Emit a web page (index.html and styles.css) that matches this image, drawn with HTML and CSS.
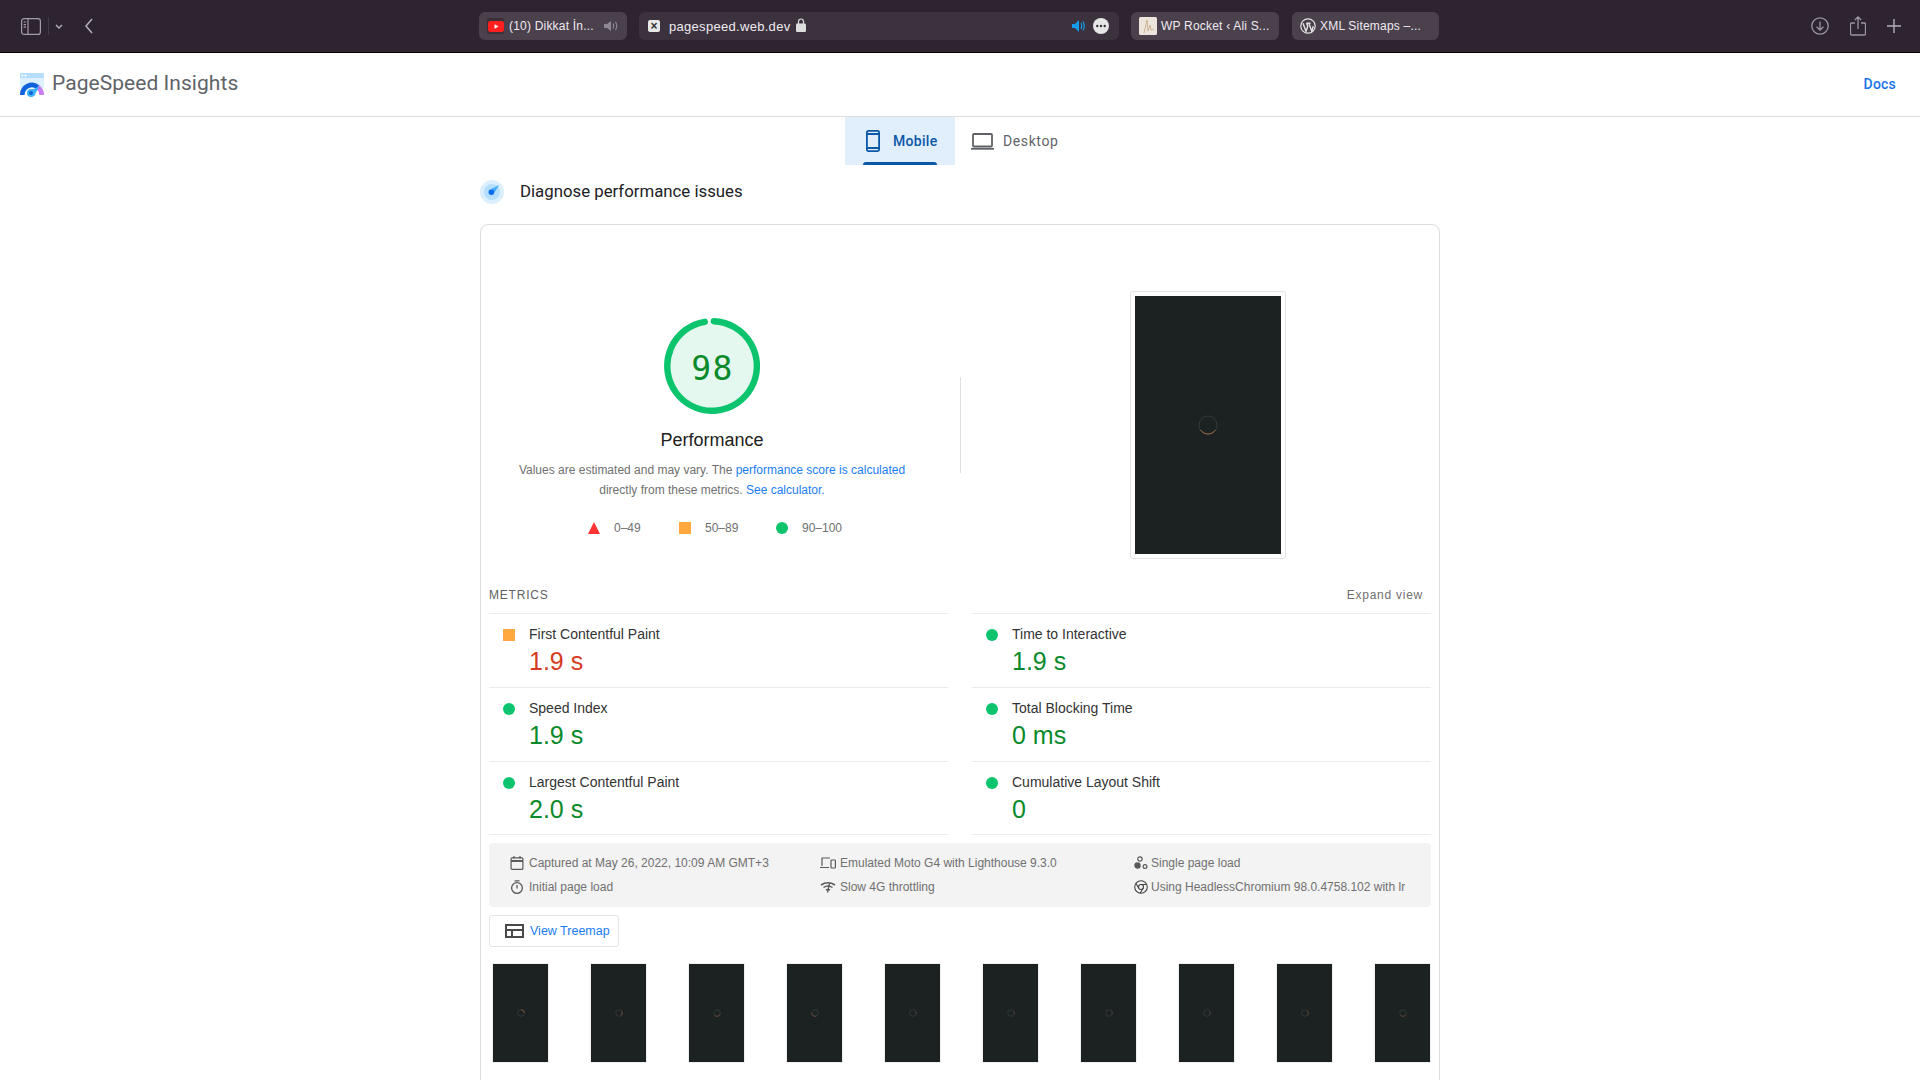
FILE: index.html
```html
<!DOCTYPE html>
<html lang="en">
<head>
<meta charset="utf-8">
<title>PageSpeed Insights</title>
<link rel="stylesheet" href="styles.css">
</head>
<body>
<div class="topbar">
  <div class="tb-left">
    <svg class="i-side" width="20" height="17" viewBox="0 0 20 17" fill="none" stroke="#a39ba6" stroke-width="1.2"><rect x=".6" y=".6" width="18.8" height="15.8" rx="2.5"/><path d="M7 .6v15.8M2.6 4h2.4M2.6 6.6h2.4M2.6 9.2h2.4"/></svg>
    <span class="tb-sep"></span>
    <svg class="i-chev" width="8" height="5" viewBox="0 0 8 5" fill="none" stroke="#b5aeb8" stroke-width="1.4"><path d="M1 1l3 3 3-3"/></svg>
    <svg class="i-back" width="8" height="16" viewBox="0 0 8 16" fill="none" stroke="#b5aeb8" stroke-width="1.5"><path d="M7 1L1 8l6 7"/></svg>
  </div>
  <div class="tab t1">
    <span class="fav-yt"><svg width="16" height="11" viewBox="0 0 16 11"><rect width="16" height="11" rx="2.5" fill="#ff1f1f"/><path d="M6.5 3.2v4.6L10.5 5.500z" fill="#fff"/></svg></span>
    <span class="tab-text w-yt">(10) Dikkat İn...</span>
    <svg width="15" height="10" viewBox="0 0 15 10" fill="#8f8892"><path d="M0 3h3l4-3v10L3 7H0z"/><path d="M9 2.500q1.500 2.500 0 5M11.500 1q2.500 4 0 8" fill="none" stroke="#8f8892" stroke-width="1.2"/></svg>
  </div>
  <div class="url">
    <span class="fav-x">×</span>
    <span class="url-text">pagespeed.web.dev</span>
    <svg class="i-lock" width="10" height="14" viewBox="0 0 10 14"><path d="M2.500 6V3.500a2.500 2.500 0 0 1 5 0V6" fill="none" stroke="#ddd" stroke-width="1.2"/><rect y="5.500" width="10" height="8.500" rx="1.3" fill="#ddd"/></svg>
    <span class="url-gap"></span>
    <svg width="14" height="12" viewBox="0 0 14 12" fill="#1799ea"><path d="M0 4h3l4-4v12L3 8H0z"/><path d="M9 3q1.500 3 0 6M11 1.500q2.500 4.500 0 9" fill="none" stroke="#1799ea" stroke-width="1.2"/></svg>
    <svg class="i-dots" width="16" height="16" viewBox="0 0 16 16"><circle cx="8" cy="8" r="8" fill="#e6e6e6"/><circle cx="4.300" cy="8" r="1.200" fill="#333"/><circle cx="8" cy="8" r="1.200" fill="#333"/><circle cx="11.700" cy="8" r="1.200" fill="#333"/></svg>
  </div>
  <div class="tab t3">
    <svg class="fav-sig" width="18" height="18" viewBox="0 0 18 18"><rect width="18" height="18" rx="1.5" fill="#ece5dc"/><path d="M5 16L8 3l1 11 2-6 1 5 3-1" fill="none" stroke="#c9ad8b" stroke-width=".9"/></svg>
    <span class="tab-text">WP Rocket ‹ Ali S...</span>
  </div>
  <div class="tab t4">
    <svg class="fav-wp" width="16" height="16" viewBox="0 0 16 16"><circle cx="8" cy="8" r="7.2" fill="none" stroke="#e4e4e4" stroke-width="1.2"/><path d="M3 5.200l3 8 1.800-5-1.300-3M6.500 5.200h4M8.800 5.200l3 8 1.500-5" fill="none" stroke="#e4e4e4" stroke-width="1.4"/></svg>
    <span class="tab-text">XML Sitemaps –...</span>
  </div>
  <div class="tb-right">
    <svg width="18" height="18" viewBox="0 0 18 18" fill="none" stroke="#9c959f" stroke-width="1.3"><circle cx="9" cy="9" r="8.200"/><path d="M9 4.500v8.500M5.500 9.800L9 13l3.500-3.200"/></svg>
    <svg width="16" height="20" viewBox="0 0 16 20" fill="none" stroke="#9c959f" stroke-width="1.3"><path d="M5 7H1.500a1 1 0 0 0-1 1v10a1 1 0 0 0 1 1h13a1 1 0 0 0 1-1V8a1 1 0 0 0-1-1H11M8 13V1M4.800 4L8 1l3.200 3"/></svg>
    <svg width="14" height="14" viewBox="0 0 14 14" fill="none" stroke="#b5aeb8" stroke-width="1.4"><path d="M7 0v14M0 7h14"/></svg>
  </div>
</div>

<header class="psi-head">
  <svg class="logo" width="24" height="24" viewBox="0 0 24 24">
    <path d="M0 15V1.500A1.500 1.500 0 0 1 1.500 0h21A1.500 1.500 0 0 1 24 1.500V15z" fill="#dcf0fe"/>
    <path d="M0 5V1.500A1.500 1.500 0 0 1 1.500 0h21A1.500 1.500 0 0 1 24 1.500V5z" fill="#b4defc"/>
    <circle cx="2.500" cy="2.500" r="1" fill="#fff"/><circle cx="5.500" cy="2.500" r="1" fill="#fff"/>
    <path d="M2.300 22a9.700 9.700 0 0 1 15.500-8" fill="none" stroke="#0e63dc" stroke-width="4.600"/>
    <path d="M17.800 14a9.700 9.700 0 0 1 3.900 8" fill="none" stroke="#c97bf2" stroke-width="4.600"/>
    <path d="M8.500 18L19.500 13.500 14 23z" fill="#3fb0f8"/>
    <circle cx="11" cy="20" r="4" fill="#3db2f8"/>
    <circle cx="11" cy="20" r="2" fill="#0a62dc"/>
  </svg>
  <span class="psi-title">PageSpeed Insights</span>
  <a class="docs">Docs</a>
</header>

<nav class="modes">
  <div class="mode active">
    <svg width="14" height="22" viewBox="0 0 14 22" fill="none" stroke="#0b57a8" stroke-width="1.8"><rect x=".9" y=".9" width="12.200" height="20.200" rx="1.5"/><path d="M1 4h12M1 18h12"/></svg>
    <span>Mobile</span>
  </div>
  <div class="mode">
    <svg width="23" height="17" viewBox="0 0 23 17" fill="none" stroke="#5f6368" stroke-width="1.8"><rect x="2" y="1" width="19" height="12.500" rx="1"/><path d="M0 15.800h23"/></svg>
    <span>Desktop</span>
  </div>
</nav>

<main class="page">
  <div class="section-head">
    <svg width="24" height="24" viewBox="0 0 24 24"><circle cx="12" cy="12" r="12" fill="#dceffe"/><circle cx="12" cy="12" r="8" fill="#b5defc"/><path d="M8.500 10.500L19 5l-6 10z" fill="#42aaf8"/><circle cx="11.300" cy="12.300" r="2.700" fill="#0a6cf0"/></svg>
    <h2>Diagnose performance issues</h2>
  </div>

  <section class="card">
    <div class="hero">
      <div class="score">
        <svg class="gauge" width="96" height="96" viewBox="0 0 96 96">
          <circle cx="48" cy="48" r="45" fill="#e5f8ef"/>
          <path d="M49.900 3.240A44.800 44.800 0 1 1 40.800 3.800" fill="none" stroke="#0cc46d" stroke-width="6.400" stroke-linecap="round"/>
          <text x="48.500" y="61.500" text-anchor="middle" class="gauge-num">98</text>
        </svg>
        <div class="score-title">Performance</div>
        <p class="score-desc">Values are estimated and may vary. The <a>performance score is calculated</a><br>directly from these metrics. <a>See calculator.</a></p>
        <div class="legend">
          <span class="leg"><i class="tri"></i>0–49</span>
          <span class="leg"><i class="sq"></i>50–89</span>
          <span class="leg"><i class="dot"></i>90–100</span>
        </div>
      </div>
      <div class="vdiv"></div>
      <div class="shot">
        <svg width="20" height="20" viewBox="0 0 20 20" fill="none"><circle cx="10" cy="10" r="9" stroke="#343a3a" stroke-width="1"/><path d="M2.500 15a9 9 0 0 0 15 0" stroke="#a86a45" stroke-width="1"/></svg>
      </div>
    </div>

    <div class="metrics-head"><span class="m-label">METRICS</span><span class="m-expand">Expand view</span></div>
    <div class="metrics">
      <div class="metric"><i class="sq"></i><div><div class="m-name">First Contentful Paint</div><div class="m-val warn">1.9 s</div></div></div>
      <div class="metric"><i class="dot"></i><div><div class="m-name">Time to Interactive</div><div class="m-val good">1.9 s</div></div></div>
      <div class="metric"><i class="dot"></i><div><div class="m-name">Speed Index</div><div class="m-val good">1.9 s</div></div></div>
      <div class="metric"><i class="dot"></i><div><div class="m-name">Total Blocking Time</div><div class="m-val good">0 ms</div></div></div>
      <div class="metric last"><i class="dot"></i><div><div class="m-name">Largest Contentful Paint</div><div class="m-val good">2.0 s</div></div></div>
      <div class="metric last"><i class="dot"></i><div><div class="m-name">Cumulative Layout Shift</div><div class="m-val good">0</div></div></div>
    </div>

    <div class="runinfo">
      <div class="ri c1"><svg width="14" height="14" viewBox="0 0 14 14" fill="none" stroke="#5a5a5a" stroke-width="1.2"><rect x="1.100" y="1.800" width="11.800" height="11.600" rx="1"/><path d="M1 5h12" stroke-width="2"/><path d="M4 0v2.500M10 0v2.500"/></svg><span>Captured at May 26, 2022, 10:09 AM GMT+3</span></div>
      <div class="ri c2"><svg width="16" height="12" viewBox="0 0 16 12" fill="none" stroke="#5a5a5a" stroke-width="1.2"><path d="M10 1H2v8M0 10.500h9"/><rect x="11" y="3" width="4.400" height="8" rx=".8"/></svg><span>Emulated Moto G4 with Lighthouse 9.3.0</span></div>
      <div class="ri c3"><svg width="14" height="14" viewBox="0 0 14 14" fill="none" stroke="#5a5a5a" stroke-width="1.2"><circle cx="6" cy="3" r="2.200"/><circle cx="11" cy="10.500" r="1.900"/><circle cx="3.500" cy="9.500" r="2.600" fill="#5a5a5a"/></svg><span>Single page load</span></div>
      <div class="ri c1"><svg width="14" height="14" viewBox="0 0 14 14" fill="none" stroke="#5a5a5a" stroke-width="1.3"><circle cx="7" cy="8" r="5.400"/><path d="M4.500 .8h5M7 5v3.500"/></svg><span>Initial page load</span></div>
      <div class="ri c2"><svg width="16" height="12" viewBox="0 0 16 12" fill="none" stroke="#5a5a5a" stroke-width="1.5"><path d="M1 4q7-4.500 14 0M3.500 6.500q4.500-3 9 0M6 9q2-1 4 0"/><path d="M9.500 2.500L7.500 11.500" stroke-width="1.3"/></svg><span>Slow 4G throttling</span></div>
      <div class="ri c3"><svg width="14" height="14" viewBox="0 0 14 14" fill="none" stroke="#444" stroke-width="1.1"><circle cx="7" cy="7" r="6.300"/><circle cx="7" cy="7" r="2.500"/><path d="M7 4.500h6M4.800 8.300L1.800 3.200M9.200 8.300L6 13.200"/></svg><span class="clip">Using HeadlessChromium 98.0.4758.102 with lr</span></div>
    </div>

    <a class="treemap">
      <svg width="19" height="14" viewBox="0 0 19 14" fill="none" stroke="#4a4a4a" stroke-width="2"><rect x="1" y="1" width="17" height="12"/><path d="M1 6h17M7 6v7"/></svg>
      <span>View Treemap</span>
    </a>

    <div class="film">
      <div class="thumb"><svg width="8" height="8" viewBox="0 0 8 8" fill="none"><circle cx="4" cy="4" r="3.3" stroke="#323838"/><path d="M4 .7A3.300 3.300 0 0 1 7.300 4" stroke="#7a5038"/></svg></div>
      <div class="thumb"><svg width="8" height="8" viewBox="0 0 8 8" fill="none"><circle cx="4" cy="4" r="3.3" stroke="#323838"/><path d="M6 1.400A3.300 3.300 0 0 1 6 6.600" stroke="#6a4a38"/></svg></div>
      <div class="thumb"><svg width="8" height="8" viewBox="0 0 8 8" fill="none"><circle cx="4" cy="4" r="3.3" stroke="#323838"/><path d="M7 5.500A3.300 3.300 0 0 1 2 6.600" stroke="#6a4a38"/></svg></div>
      <div class="thumb"><svg width="8" height="8" viewBox="0 0 8 8" fill="none"><circle cx="4" cy="4" r="3.3" stroke="#323838"/><path d="M5.500 7A3.300 3.300 0 0 1 .8 4" stroke="#6a4a38"/></svg></div>
      <div class="thumb"><svg width="8" height="8" viewBox="0 0 8 8" fill="none"><circle cx="4" cy="4" r="3.3" stroke="#323838"/><path d="M7 2.600A3.300 3.300 0 0 1 7 5.400" stroke="#4f4238"/></svg></div>
      <div class="thumb"><svg width="8" height="8" viewBox="0 0 8 8" fill="none"><circle cx="4" cy="4" r="3.3" stroke="#323838"/><path d="M6.500 1.800A3.300 3.300 0 0 1 7 5.400" stroke="#4f4238"/></svg></div>
      <div class="thumb"><svg width="8" height="8" viewBox="0 0 8 8" fill="none"><circle cx="4" cy="4" r="3.3" stroke="#323838"/><path d="M6.500 1.800A3.300 3.300 0 0 1 7 5.400" stroke="#4f4238"/></svg></div>
      <div class="thumb"><svg width="8" height="8" viewBox="0 0 8 8" fill="none"><circle cx="4" cy="4" r="3.3" stroke="#323838"/><path d="M7 2.600A3.300 3.300 0 0 1 7 5.400" stroke="#4f4238"/></svg></div>
      <div class="thumb"><svg width="8" height="8" viewBox="0 0 8 8" fill="none"><circle cx="4" cy="4" r="3.3" stroke="#323838"/><path d="M6 1.400A3.300 3.300 0 0 1 6 6.600" stroke="#4f4238"/></svg></div>
      <div class="thumb"><svg width="8" height="8" viewBox="0 0 8 8" fill="none"><circle cx="4" cy="4" r="3.3" stroke="#323838"/><path d="M1.500 6.200A3.300 3.300 0 0 0 6.500 6.200" stroke="#5f3f30"/></svg></div>
    </div>
  </section>
</main>
</body>
</html>
```
FILE: styles.css
```css
* { box-sizing: border-box; }
html, body { margin: 0; height: 1080px; overflow: hidden; background: #fff; }
body { font-family: "Liberation Sans", Arial, sans-serif; color: #212121; }
a { color: #1a7df5; text-decoration: none; }
svg { display: block; flex: none; }

.topbar { height: 53px; background: #2e2430; border-bottom: 1px solid #000; display: flex; align-items: center; }
.tb-left { display: flex; align-items: center; width: 479px; padding-left: 21px; }
.tb-sep { width: 1px; height: 18px; background: #423a45; margin: 0 6px 0 7px; }
.i-back { margin-left: 22px; }
.tab { height: 28px; border-radius: 6px; background: #4a414d; display: flex; align-items: center; color: #efeaf0; font: 12px "Liberation Sans", sans-serif; letter-spacing: .2px; }
.tab-text { white-space: nowrap; }
.t1 { width: 148px; padding-left: 8px; gap: 5px; margin-right: 12px; }
.w-yt { width: 90px; }
.fav-yt { width: 17px; height: 16px; background: #3a3038; border-radius: 2px; display: flex; align-items: center; justify-content: center; }
.url { width: 480px; height: 28px; border-radius: 6px; background: #3b323e; display: flex; align-items: center; padding: 0 10px 0 9px; margin-right: 12px; color: #efeaf0; font-size: 13px; letter-spacing: .3px; }
.fav-x { width: 12px; height: 12px; border-radius: 2px; background: #e8e8e8; color: #333; font-size: 12px; line-height: 12px; text-align: center; font-weight: 700; letter-spacing: 0; }
.url-text { margin-left: 9px; white-space: nowrap; }
.i-lock { margin-left: 6px; margin-top: -3px; }
.url-gap { flex: 1; }
.i-dots { margin-left: 7px; }
.t3 { width: 148px; padding-left: 8px; gap: 4px; margin-right: 13px; }
.t4 { width: 147px; padding-left: 8px; gap: 4px; }
.tb-right { margin-left: auto; padding-right: 19px; display: flex; align-items: center; gap: 21px; }

.psi-head { height: 64px; border-bottom: 1px solid #dcdcdc; display: flex; align-items: center; padding: 0 24px 0 20px; }
.psi-title { margin: 0 0 3px 8px; font: 400 21px Roboto, sans-serif; color: #5f6368; letter-spacing: .05px; }
.docs { margin: 0 0 2px auto; font: 500 14px Roboto, sans-serif; color: #1a73e8; letter-spacing: .2px; }

.modes { display: flex; justify-content: center; height: 48px; }
.mode { height: 48px; width: 120px; display: flex; align-items: center; gap: 9px; padding: 0 0 0 16px; color: #5f6368; font: 400 14px Roboto, sans-serif; letter-spacing: .6px; position: relative; }
.mode.active { width: 110px; background: #e1eefb; color: #0b57a8; padding-left: 21px; gap: 13px; font-weight: 500; letter-spacing: .3px; }
.mode.active::after { content: ""; position: absolute; left: 18px; right: 18px; bottom: 0; height: 3px; background: #0b57a8; border-radius: 3px 3px 0 0; }

.page { width: 960px; margin: 0 auto; }
.section-head { display: flex; align-items: center; gap: 16px; margin-top: 15px; height: 24px; }
.section-head h2 { margin: 0 0 2px; font: 400 16.8px Roboto, sans-serif; color: #202124; }
.card { margin-top: 20px; height: 1000px; border: 1px solid #dcdcdc; border-radius: 8px; padding: 0 8px; }

.hero { height: 355px; display: flex; }
.score { width: 446px; padding-top: 93px; display: flex; flex-direction: column; align-items: center; }
.gauge-num { font: 33px "DejaVu Sans Mono", monospace; fill: #0a8a2a; letter-spacing: 1.5px; }
.score-title { margin-top: 12px; font-size: 18px; line-height: 28px; color: #212121; }
.score-desc { margin: 6px 0 0; font-size: 12px; line-height: 20px; color: #707070; text-align: center; white-space: nowrap; }
.legend { margin-top: 21px; display: flex; height: 14px; align-items: center; font-size: 12px; color: #707070; width: 248px; white-space: nowrap; }
.leg { display: flex; align-items: center; gap: 14px; flex: none; }
.leg:nth-child(1) { width: 91px; }
.leg:nth-child(2) { width: 97px; }
.tri { width: 12px; height: 12px; background: #ff3333; clip-path: polygon(50% 0, 100% 100%, 0 100%); display: block; }
.sq { width: 12px; height: 12px; background: #ffa840; display: block; flex: none; }
.dot { width: 12px; height: 12px; border-radius: 50%; background: #0cc46d; display: block; flex: none; }
.vdiv { width: 1px; height: 96px; margin: 152px 0 0 25px; background: #e0e0e0; }
.shot { width: 156px; height: 268px; margin: 66px 0 0 169px; border: 1px solid #e2e2e2; border-radius: 3px; background: #1c2121 content-box; padding: 4px; display: flex; align-items: center; justify-content: center; }

.metrics-head { height: 33px; padding: 0 8px 3px 0; display: flex; align-items: center; justify-content: space-between; font-size: 12px; color: #616161; }
.m-label { letter-spacing: .8px; }
.m-expand { letter-spacing: .75px; color: #707070; }
.metrics { display: grid; grid-template-columns: 459px 459px; column-gap: 24px; }
.metric { height: 74px; border-top: 1px solid #ebebeb; display: flex; padding: 10px 0 0 14px; }
.metric.last { border-bottom: 1px solid #ebebeb; }
.metric > i { margin: 5px 14px 0 0; }
.m-name { font-size: 14px; line-height: 20px; color: #333; }
.m-val { font-size: 25px; line-height: 30px; margin-top: 2px; }
.warn { color: #d63b1f; }
.good { color: #0a8a2a; }

.runinfo { margin-top: 8px; height: 64px; background: #f3f3f3; border-radius: 4px; padding: 8px 0 0 21px; display: grid; grid-template-columns: 310px 314px 1fr; grid-auto-rows: 24px; font-size: 12px; color: #707070; }
.ri { display: flex; align-items: center; white-space: nowrap; }
.ri.c1 { gap: 5px; }
.ri.c2 { gap: 4px; }
.ri.c3 { gap: 3px; }
.clip { overflow: hidden; }

.treemap { margin-top: 8px; width: 130px; height: 32px; border: 1px solid #e4e4e4; border-radius: 3px; display: flex; align-items: center; gap: 6px; padding-left: 15px; font-size: 12.5px; }
.film { margin-top: 16px; padding-left: 3px; display: flex; justify-content: space-between; }
.thumb { width: 57px; height: 100px; border: 1px solid #eee; background: #1c2121; display: flex; align-items: center; justify-content: center; }
```
